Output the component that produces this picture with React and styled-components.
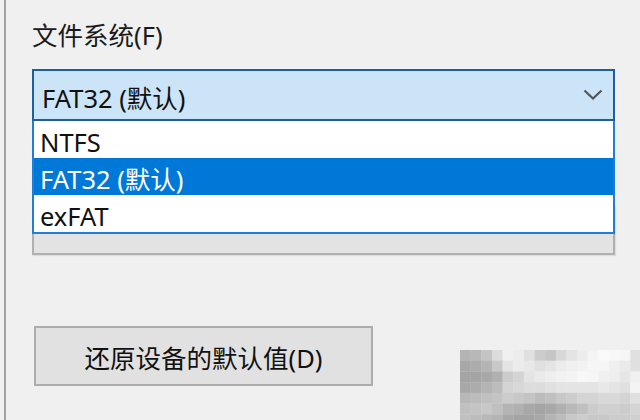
import React from 'react';
import styled, { createGlobalStyle } from 'styled-components';

const GlobalStyle = createGlobalStyle`
  html, body {
    margin: 0;
    padding: 0;
    background: #f0f0f0;
  }
  body {
    font-family: "Noto Sans", "Noto Sans CJK SC", sans-serif;
    color: #000;
  }
`;

const Page = styled.div`
  position: relative;
  width: 640px;
  height: 420px;
  overflow: hidden;
  padding-left: 4px;
  box-sizing: border-box;
  background: #f0f0f0;
`;

const Panel = styled.div`
  height: 100%;
  border-left: 2px solid #a3a3a3;
  padding: 18px 25px 0 26px;
  box-sizing: border-box;
  display: flex;
  flex-direction: column;
`;

const Label = styled.div`
  font-size: 25.5px;
  line-height: 34px;
  height: 34px;
  color: #1a1a1a;
`;

const Field = styled.div`
  position: relative;
  margin-top: 17px;
`;

const Combo = styled.div`
  height: 52px;
  box-sizing: border-box;
  border: 2px solid #1d5fa3;
  background: #cce4f7;
  display: flex;
  align-items: center;
  justify-content: space-between;
  padding: 2px 10px 0 8px;
  font-size: 25.5px;
  color: #111;
`;

const Chevron = styled.svg`
  width: 20px;
  height: 12px;
  margin-top: -2px;
`;

const Menu = styled.ul`
  position: absolute;
  left: 0;
  right: 0;
  top: 52px;
  margin: 0;
  padding: 0;
  list-style: none;
  border: 2px solid #1f7fd8;
  border-top-width: 0;
  background: #fff;
  z-index: 2;
`;

const MenuItem = styled.li`
  height: 37px;
  box-sizing: border-box;
  display: flex;
  align-items: center;
  padding: 5px 0 0 6px;
  line-height: 1.2;
  font-size: 25.5px;
  background: ${(p) => (p.$selected ? '#0078d7' : '#fff')};
  color: ${(p) => (p.$selected ? '#fff' : '#111')};
`;

const HiddenControl = styled.div`
  margin-top: 84px;
  height: 50px;
  box-sizing: border-box;
  border: 2px solid #b0b0b0;
  background: #e3e3e3;
  box-shadow: 1px 1px 1px rgba(0, 0, 0, 0.08);
`;

const Button = styled.button`
  margin-top: 71px;
  margin-left: 2px;
  width: 339px;
  height: 60px;
  border: 2px solid #adadad;
  background: #e1e1e1;
  font-family: inherit;
  font-size: 25.5px;
  color: #111;
  padding: 0;
`;

const Mosaic = styled.svg`
  position: absolute;
  left: 460px;
  top: 350px;
  width: 181px;
  height: 75px;
`;

const mosaic = [
  'b4 b8 c4 dc f0 ec e0 cc c6 d8 e4 ec f4 fa f8 f6 e0',
  'a8 ac b4 c8 e4 ec e8 e0 e4 ec f0 f2 f6 f6 f0 ea e0',
  'a4 a4 a8 b0 cc d4 e4 ea ee f2 f4 f8 f6 f0 ee e6 f0',
  'a8 ac b4 bc d4 d8 dc dc e0 e4 e4 e4 e4 e8 e4 e0 f4',
  'b8 bc c0 c4 cc c8 c4 bc c0 c8 cc d4 d4 d8 d8 d4 e0',
  'c0 c4 c8 c0 b4 b0 a8 a4 a8 b0 b8 c0 cc d0 d0 cc d4',
  'c0 bc b8 b4 a8 a4 a4 a8 b4 bc c8 cc c8 c8 cc cc d0',
].map((row) => row.split(' '));

const options = ['NTFS', 'FAT32 (默认)', 'exFAT'];

export default function App() {
  return (
    <>
      <GlobalStyle />
      <Page>
        <Panel>
          <Label>文件系统(F)</Label>
          <Field>
            <Combo>
              <span>FAT32 (默认)</span>
              <Chevron viewBox="0 0 20 12">
                <polyline points="1.5,1.5 10,9.5 18.5,1.5" fill="none" stroke="#555" strokeWidth="2.2" />
              </Chevron>
            </Combo>
            <Menu>
              {options.map((o) => (
                <MenuItem key={o} $selected={o === 'FAT32 (默认)'}>{o}</MenuItem>
              ))}
            </Menu>
          </Field>
          <HiddenControl />
          <Button>还原设备的默认值(D)</Button>
        </Panel>
        <Mosaic viewBox="0 0 17 7" preserveAspectRatio="none">
          {mosaic.map((row, r) =>
            row.map((c, i) => (
              <rect key={`${r}-${i}`} x={i} y={r} width="1.02" height="1.02" fill={`#${c}${c}${c}`} />
            ))
          )}
        </Mosaic>
      </Page>
    </>
  );
}
